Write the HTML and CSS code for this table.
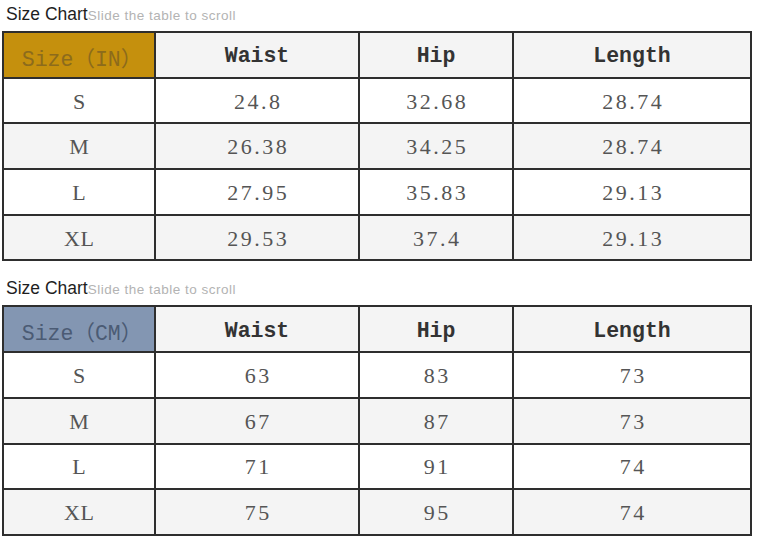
FILE: index.html
```html
<!DOCTYPE html>
<html lang="en">
<head>
<meta charset="utf-8">
<title>Size Chart</title>
<link rel="stylesheet" href="styles.css">
</head>
<body>
<section class="chart">
  <div class="title"><span class="t-main">Size Chart</span><span class="t-hint">Slide the table to scroll</span></div>
  <table class="size-table">
    <colgroup><col class="c1"><col class="c2"><col class="c3"><col class="c4"></colgroup>
    <thead>
      <tr><th class="size-head in">Size（IN）</th><th>Waist</th><th>Hip</th><th>Length</th></tr>
    </thead>
    <tbody>
      <tr><td class="size">S</td><td>24.8</td><td>32.68</td><td>28.74</td></tr>
      <tr class="alt"><td class="size">M</td><td>26.38</td><td>34.25</td><td>28.74</td></tr>
      <tr><td class="size">L</td><td>27.95</td><td>35.83</td><td>29.13</td></tr>
      <tr class="alt"><td class="size">XL</td><td>29.53</td><td>37.4</td><td>29.13</td></tr>
    </tbody>
  </table>
</section>
<section class="chart">
  <div class="title"><span class="t-main">Size Chart</span><span class="t-hint">Slide the table to scroll</span></div>
  <table class="size-table">
    <colgroup><col class="c1"><col class="c2"><col class="c3"><col class="c4"></colgroup>
    <thead>
      <tr><th class="size-head cm">Size（CM）</th><th>Waist</th><th>Hip</th><th>Length</th></tr>
    </thead>
    <tbody>
      <tr><td class="size">S</td><td>63</td><td>83</td><td>73</td></tr>
      <tr class="alt"><td class="size">M</td><td>67</td><td>87</td><td>73</td></tr>
      <tr><td class="size">L</td><td>71</td><td>91</td><td>74</td></tr>
      <tr class="alt"><td class="size">XL</td><td>75</td><td>95</td><td>74</td></tr>
    </tbody>
  </table>
</section>
</body>
</html>
```

FILE: styles.css
```css
html, body {
  margin: 0;
  padding: 0;
  background: #ffffff;
}

.chart {
  padding-left: 2px;
  width: 750px;
}

.chart + .chart {
  margin-top: 13px;
}

.title {
  box-sizing: border-box;
  height: 31px;
  padding: 4px 0 0 4px;
  line-height: 20px;
  font-family: "Liberation Sans", Arial, sans-serif;
  white-space: nowrap;
}

.t-main {
  font-size: 17.5px;
  color: #1e1e1e;
}

.t-hint {
  font-size: 13.5px;
  letter-spacing: 0.5px;
  color: #b3b3b3;
}

.size-table {
  border-collapse: collapse;
  table-layout: fixed;
  width: 748px;
}

.c1 { width: 152px; }
.c2 { width: 204px; }
.c3 { width: 154px; }
.c4 { width: 238px; }

.size-table tr {
  height: 45.7px;
}

.size-table th,
.size-table td {
  border: 2px solid #2e2e2e;
  padding: 2px 0 0;
  text-align: center;
  vertical-align: middle;
}

.size-table thead tr,
.size-table tr.alt {
  background: #f4f4f4;
}

.size-table th {
  padding-top: 3px;
  font-family: "Liberation Mono", "Noto Sans CJK SC", monospace;
  font-weight: bold;
  font-size: 21.5px;
  color: #333333;
}

.size-table td {
  font-family: "Liberation Serif", "Times New Roman", serif;
  font-size: 22px;
  letter-spacing: 2.5px;
  padding-left: 2.5px;
  color: #555555;
}

.size-table td.size {
  letter-spacing: 0.5px;
  padding-left: 0.5px;
}

.size-table th.size-head {
  font-weight: normal;
  padding-left: 6px;
}

.size-head.in {
  background: #c5900d;
  color: #8c6b1c;
}

.size-head.cm {
  background: #8396b2;
  color: #4b5b74;
}
```
